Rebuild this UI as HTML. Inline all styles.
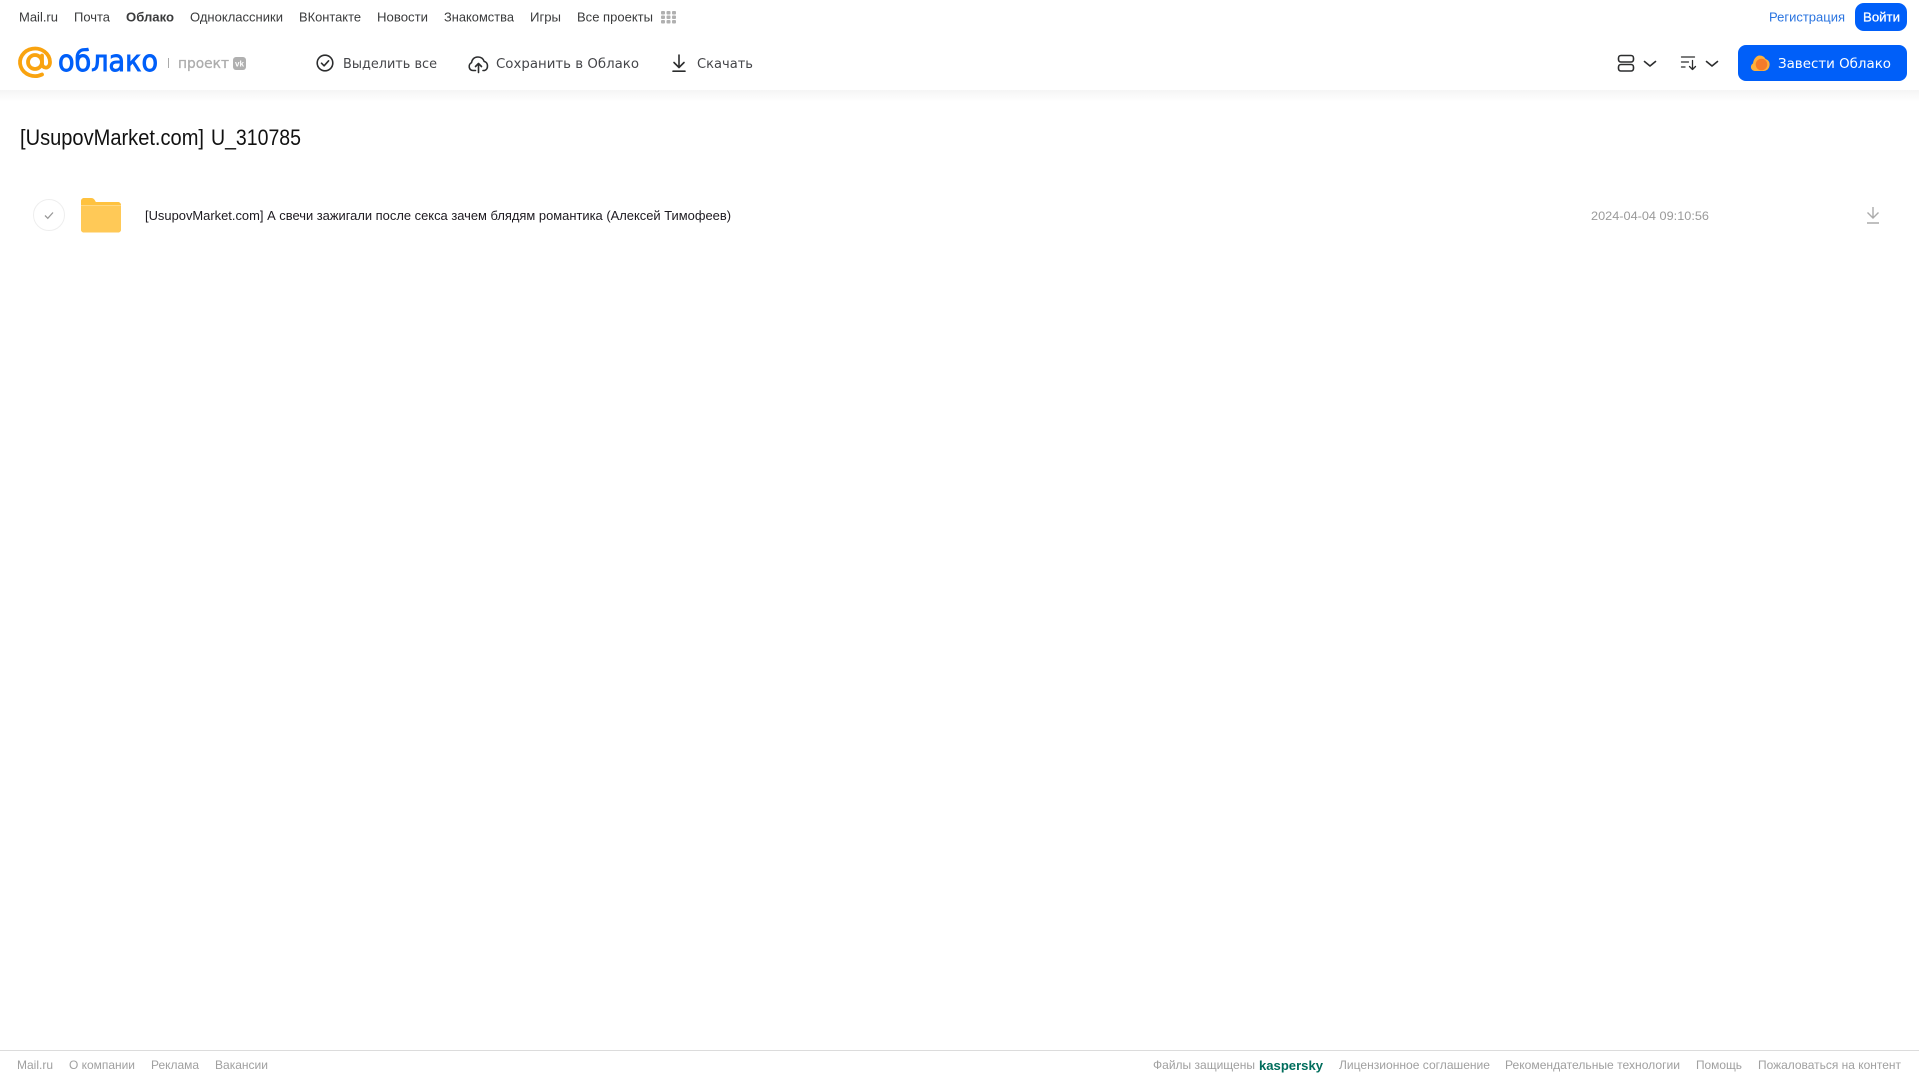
<!DOCTYPE html>
<html lang="ru"><head><meta charset="utf-8"><title>Облако</title>
<style>
html,body{margin:0;padding:0;background:#fff;width:1919px;height:1079px;overflow:hidden}
svg{display:block;position:absolute;left:0;top:0}
text{font-family:"Liberation Sans",sans-serif;white-space:pre}
.n{font-size:13px;fill:#3a3b3c}
.t{font-family:"DejaVu Sans",sans-serif;font-size:13.5px;fill:#45464a}
.f{font-size:12px;fill:#a0a0a0}
.i{fill:none;stroke:#2c2d2e;stroke-width:1.6;stroke-linecap:round;stroke-linejoin:round}
#sh{position:absolute;left:0;top:90px;width:1919px;height:12px;background:linear-gradient(#f5f5f5,#fff)}
</style></head><body>
<div id="sh"></div>
<svg width="1919" height="1079" viewBox="0 0 1919 1079" xmlns="http://www.w3.org/2000/svg">
<g class="n">
<text x="19" y="21.500" textLength="39" lengthAdjust="spacingAndGlyphs">Mail.ru</text>
<text x="74" y="21.500" textLength="36" lengthAdjust="spacingAndGlyphs">Почта</text>
<text x="126" y="21.500" textLength="48" lengthAdjust="spacingAndGlyphs" font-weight="700">Облако</text>
<text x="190" y="21.500" textLength="93" lengthAdjust="spacingAndGlyphs">Одноклассники</text>
<text x="299" y="21.500" textLength="62" lengthAdjust="spacingAndGlyphs">ВКонтакте</text>
<text x="377" y="21.500" textLength="51" lengthAdjust="spacingAndGlyphs">Новости</text>
<text x="444" y="21.500" textLength="70" lengthAdjust="spacingAndGlyphs">Знакомства</text>
<text x="530" y="21.500" textLength="31" lengthAdjust="spacingAndGlyphs">Игры</text>
<text x="577" y="21.500" textLength="76" lengthAdjust="spacingAndGlyphs">Все проекты</text>
</g>
<g fill="#b0b0b0">
<rect x="661" y="11" width="4" height="3.500" rx="1"/><rect x="666.500" y="11" width="4" height="3.500" rx="1"/><rect x="672" y="11" width="4" height="3.500" rx="1"/>
<rect x="661" y="15.500" width="4" height="3.500" rx="1"/><rect x="666.500" y="15.500" width="4" height="3.500" rx="1"/><rect x="672" y="15.500" width="4" height="3.500" rx="1"/>
<rect x="661" y="20" width="4" height="3.500" rx="1"/><rect x="666.500" y="20" width="4" height="3.500" rx="1"/><rect x="672" y="20" width="4" height="3.500" rx="1"/>
</g>
<text x="1769" y="21.500" font-size="13" fill="#2a74e0" textLength="76" lengthAdjust="spacingAndGlyphs">Регистрация</text>
<rect x="1855" y="3" width="52" height="28" rx="9" fill="#005ff9"/>
<text x="1863" y="21.500" font-size="13" stroke="#fff" stroke-width=".25" fill="#fff" textLength="37" lengthAdjust="spacingAndGlyphs">Войти</text>

<!-- logo -->
<g fill="none" stroke="#f9a30f" stroke-width="3.800" stroke-linecap="round">
<circle cx="35" cy="62" r="7"/>
<path d="M42 55.500v8c0 5.500 8 6 8-1.500A15 13.800 0 1 0 42 74.500"/>
</g>
<text x="58" y="71" font-size="29" fill="#005ff9" stroke="#005ff9" stroke-width=".9" textLength="100" lengthAdjust="spacingAndGlyphs" style="font-family:'DejaVu Sans',sans-serif">облако</text>
<rect x="168" y="58" width="1" height="10" fill="#aaa"/>
<text x="178" y="68" font-size="14" fill="#adadad" stroke="#adadad" stroke-width=".3" textLength="51" lengthAdjust="spacingAndGlyphs" style="font-family:'DejaVu Sans',sans-serif">проект</text>
<rect x="233" y="57" width="13" height="13" rx="3" fill="#b0b0b0"/>
<text x="235" y="66.500" font-size="8" font-weight="700" fill="#fff" textLength="9" lengthAdjust="spacingAndGlyphs">vk</text>

<!-- toolbar -->
<circle class="i" cx="325" cy="63" r="7.800"/>
<path class="i" d="M321.500 63.200l2.600 2.600 4.500-5"/>
<text class="t" x="343" y="68" textLength="94" lengthAdjust="spacingAndGlyphs">Выделить все</text>
<path class="i" d="M475.500 70.500h-2.500c-4.500 0-5-6.300-1.500-7.800.3-2.700 2.300-5.700 6.500-5.700 3.300 0 5.300 1.800 6.200 4.500 3.800.5 4.800 7.500.3 9H483"/>
<path class="i" d="M478.500 72.500V63.500M475.500 66.500l3-3 3 3"/>
<text class="t" x="496" y="68" textLength="143" lengthAdjust="spacingAndGlyphs">Сохранить в Облако</text>
<path class="i" d="M679 55v12M674 62.500l5 5 5-5M673 71.200h12"/>
<text class="t" x="697" y="68" textLength="56" lengthAdjust="spacingAndGlyphs">Скачать</text>

<!-- right controls -->
<rect class="i" x="1618.500" y="55.500" width="15" height="6.500" rx="2.500"/>
<rect class="i" x="1618.500" y="64.500" width="15" height="6.500" rx="2.500"/>
<path class="i" d="M1644.500 61.500l5.500 4.500 5.500-4.500"/>
<path class="i" style="stroke-width:1.300" d="M1681.500 57h13M1681.500 62h7M1681.500 67h3.500M1692.500 60.500v9M1689.500 66.500l3 3 3-3"/>
<path class="i" d="M1706.500 61.500l5.500 4.500 5.500-4.500"/>
<rect x="1738" y="45" width="169" height="36" rx="8" fill="#005ff9"/>
<path d="M1755.500 71c-5 0-6-5.500-2.500-7.500.5-4.500 3.500-8 6.500-8s5 1.500 6 3.500c3.500 1 4.500 4 4 6.500-.5 3.500-3 5.500-6 5.500z" fill="#ffb03a"/>
<circle cx="1761.500" cy="64.500" r="5.800" fill="#f47b2a"/>
<text x="1778" y="68" font-size="13.500" fill="#fff" textLength="113" lengthAdjust="spacingAndGlyphs" style="font-family:'DejaVu Sans',sans-serif">Завести Облако</text>

<!-- title -->
<text x="20" y="145" font-size="22" fill="#111" textLength="184" lengthAdjust="spacingAndGlyphs">[UsupovMarket.com]</text>
<text x="211" y="145" font-size="22" fill="#111" textLength="90" lengthAdjust="spacingAndGlyphs">U_310785</text>

<!-- row -->
<circle cx="49" cy="215" r="15.500" fill="#fff" stroke="#eeeeee" stroke-width="1"/>
<path d="M45 215.500l2.800 2.800 5.200-5.800" fill="none" stroke="#999" stroke-width="1.300"/>
<path d="M81 201c0-1.700 1.300-3 3-3h7c2 0 3 .8 4 2.500l.8 1.500H118c1.700 0 3 1.300 3 3v24.500c0 1.700-1.300 3-3 3H84c-1.700 0-3-1.300-3-3z" fill="#ffc23f"/>
<path d="M81 206h40v23.500c0 1.700-1.300 3-3 3H84c-1.700 0-3-1.300-3-3z" fill="#ffc957"/>
<rect x="81" y="205" width="40" height="1" fill="#ffd884"/>
<text x="145" y="220" font-size="12.500" fill="#1d1a20" textLength="586" lengthAdjust="spacingAndGlyphs">[UsupovMarket.com] А свечи зажигали после секса зачем блядям романтика (Алексей Тимофеев)</text>
<text x="1591" y="220" font-size="12" fill="#9a9a9a" textLength="118" lengthAdjust="spacingAndGlyphs">2024-04-04 09:10:56</text>
<path d="M1873 207v11M1867.500 212.500l5.500 5.500 5.500-5.500M1867 223h12" fill="none" stroke="#ababab" stroke-width="1.400"/>

<!-- footer -->
<rect x="0" y="1050" width="1919" height="1" fill="#dcdcdc"/>
<g class="f">
<text x="17" y="1069" textLength="36" lengthAdjust="spacingAndGlyphs">Mail.ru</text>
<text x="69" y="1069" textLength="66" lengthAdjust="spacingAndGlyphs">О компании</text>
<text x="151" y="1069" textLength="48" lengthAdjust="spacingAndGlyphs">Реклама</text>
<text x="215" y="1069" textLength="53" lengthAdjust="spacingAndGlyphs">Вакансии</text>
<text x="1153" y="1069" textLength="102" lengthAdjust="spacingAndGlyphs">Файлы защищены</text>
<text x="1339" y="1069" textLength="151" lengthAdjust="spacingAndGlyphs">Лицензионное соглашение</text>
<text x="1505" y="1069" textLength="175" lengthAdjust="spacingAndGlyphs">Рекомендательные технологии</text>
<text x="1696" y="1069" textLength="46" lengthAdjust="spacingAndGlyphs">Помощь</text>
<text x="1758" y="1069" textLength="143" lengthAdjust="spacingAndGlyphs">Пожаловаться на контент</text>
</g>
<text x="1259" y="1070" font-size="13" font-weight="700" fill="#006d5c" textLength="64" lengthAdjust="spacingAndGlyphs">kaspersky</text>
</svg>
</body></html>
